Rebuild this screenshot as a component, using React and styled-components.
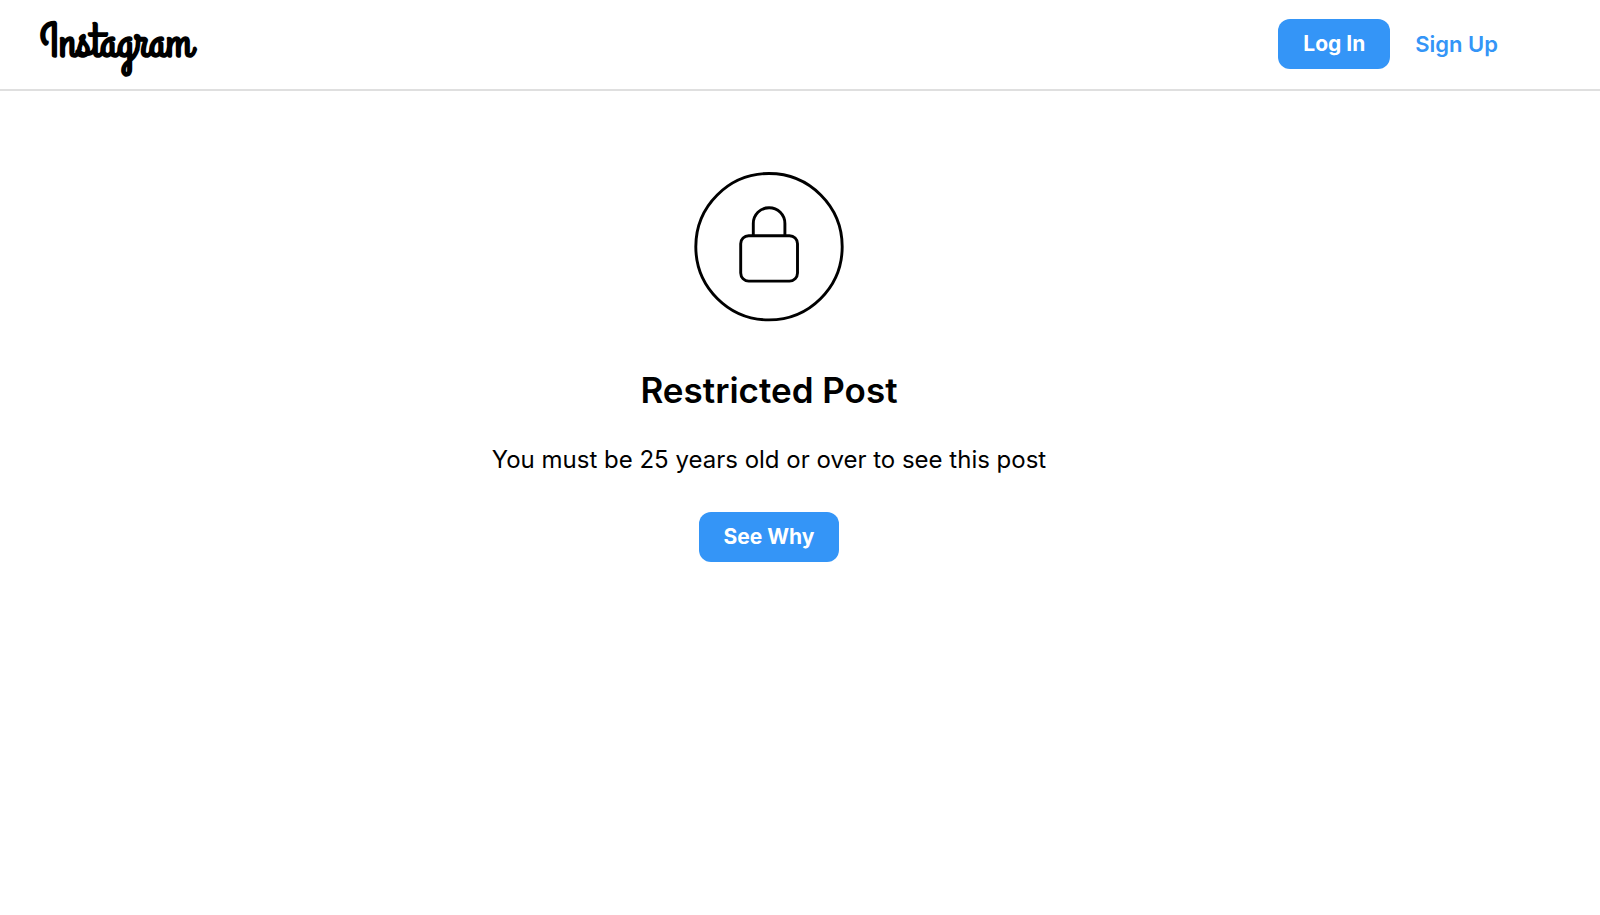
import React from 'react';
import styled, { createGlobalStyle } from 'styled-components';

const GlobalStyle = createGlobalStyle`
  * {
    box-sizing: border-box;
  }
  body {
    margin: 0;
    background-color: #fff;
    color: #000;
    font-family: Inter, Roboto, sans-serif;
  }
`;

const Page = styled.div`
  min-height: 100vh;
`;

const Header = styled.header`
  display: flex;
  align-items: center;
  justify-content: space-between;
  padding: 19px 102px 20px 40px;
  border-bottom: 2px solid #dfdfdf;
`;

const Logo = styled.a`
  color: #000;
  font-family: 'Grand Hotel', cursive;
  font-size: 48px;
  font-weight: 700;
  line-height: 50px;
  text-decoration: none;
`;

const Nav = styled.nav`
  display: flex;
  align-items: center;
  gap: 25px;
`;

const Button = styled.button`
  height: 50px;
  padding: 0 25px;
  border: 0;
  border-radius: 12px;
  background-color: #3495f7;
  color: #fff;
  font-family: inherit;
  font-size: 21px;
  font-weight: 700;
  line-height: 28px;
  cursor: pointer;
`;

const NavLink = styled.a`
  color: #3495f7;
  font-size: 22px;
  font-weight: 600;
  line-height: 28px;
  text-decoration: none;
`;

const Main = styled.main`
  display: flex;
  flex-direction: column;
  align-items: center;
  padding: 81px 62px 40px 0;
`;

const Title = styled.h1`
  margin: 44px 0 0;
  font-size: 35px;
  font-weight: 600;
  line-height: 48px;
`;

const Message = styled.p`
  margin: 30px 0 36px;
  font-size: 24px;
  line-height: 32px;
`;

const LockIcon = () => (
  <svg width="150" height="150" viewBox="0 0 150 150" fill="none" stroke="#000" strokeWidth="2.9" aria-hidden="true">
    <circle cx="75" cy="74.7" r="73.2" />
    <rect x="46.7" y="63.7" width="56.8" height="45.4" rx="8" />
    <path d="M59.3 63.7V51.5a15.8 15.8 0 0 1 31.6 0V63.7" />
  </svg>
);

const App = () => (
  <Page>
    <GlobalStyle />
    <Header>
      <Logo href="#">Instagram</Logo>
      <Nav>
        <Button type="button">Log In</Button>
        <NavLink href="#signup">Sign Up</NavLink>
      </Nav>
    </Header>
    <Main>
      <LockIcon />
      <Title>Restricted Post</Title>
      <Message>You must be 25 years old or over to see this post</Message>
      <Button type="button">See Why</Button>
    </Main>
  </Page>
);

export default App;
